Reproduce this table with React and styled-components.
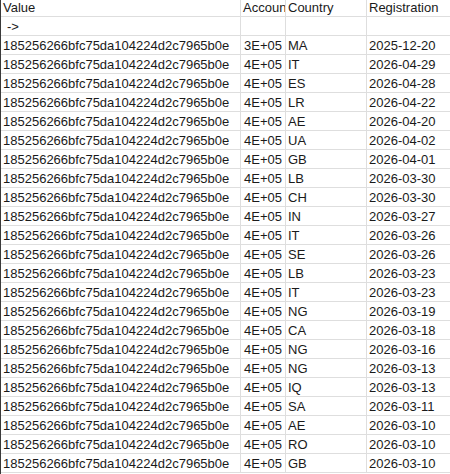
import React from "react";
import styled, { createGlobalStyle } from "styled-components";

const Global = createGlobalStyle`
  html, body { margin: 0; padding: 0; background: #ffffff; }
  body { font-family: "Liberation Sans", Arial, sans-serif; }
`;

const Sheet = styled.div`
  display: grid;
  grid-template-columns: 240px 45px 81px 1fr;
  grid-auto-rows: 19px;
  grid-template-rows: 17px 19px;
  border-left: 1px solid #3a3a3a;
  width: 449px;
  height: 474px;
  overflow: hidden;
  box-sizing: content-box;
`;

const Cell = styled.div`
  box-sizing: border-box;
  display: flex;
  align-items: flex-end;
  justify-content: ${(p) => (p.$num ? "flex-end" : "flex-start")};
  padding: 0 ${(p) => (p.$num ? "3px" : "0")} 1px ${(p) => (p.$indent ? "6px" : "2px")};
  border-right: ${(p) => (p.$last ? "none" : "1px solid #dedede")};
  border-bottom: 1px solid #dedede;
  font-size: 13px;
  line-height: 15px;
  color: #1a1a1a;
  white-space: nowrap;
  overflow: hidden;
`;

const HASH = "185256266bfc75da104224d2c7965b0e";

const rows = [
  ["3E+05", "MA", "2025-12-20"],
  ["4E+05", "IT", "2026-04-29"],
  ["4E+05", "ES", "2026-04-28"],
  ["4E+05", "LR", "2026-04-22"],
  ["4E+05", "AE", "2026-04-20"],
  ["4E+05", "UA", "2026-04-02"],
  ["4E+05", "GB", "2026-04-01"],
  ["4E+05", "LB", "2026-03-30"],
  ["4E+05", "CH", "2026-03-30"],
  ["4E+05", "IN", "2026-03-27"],
  ["4E+05", "IT", "2026-03-26"],
  ["4E+05", "SE", "2026-03-26"],
  ["4E+05", "LB", "2026-03-23"],
  ["4E+05", "IT", "2026-03-23"],
  ["4E+05", "NG", "2026-03-19"],
  ["4E+05", "CA", "2026-03-18"],
  ["4E+05", "NG", "2026-03-16"],
  ["4E+05", "NG", "2026-03-13"],
  ["4E+05", "IQ", "2026-03-13"],
  ["4E+05", "SA", "2026-03-11"],
  ["4E+05", "AE", "2026-03-10"],
  ["4E+05", "RO", "2026-03-10"],
  ["4E+05", "GB", "2026-03-10"],
];

export default function App() {
  return (
    <>
      <Global />
      <Sheet>
        <Cell>Value</Cell>
        <Cell>Accoun</Cell>
        <Cell>Country</Cell>
        <Cell $last>Registration</Cell>

        <Cell $indent>-&gt;</Cell>
        <Cell />
        <Cell />
        <Cell $last />

        {rows.map(([acc, country, date], i) => (
          <React.Fragment key={i}>
            <Cell>{HASH}</Cell>
            <Cell $num>{acc}</Cell>
            <Cell>{country}</Cell>
            <Cell $last>{date}</Cell>
          </React.Fragment>
        ))}
      </Sheet>
    </>
  );
}
